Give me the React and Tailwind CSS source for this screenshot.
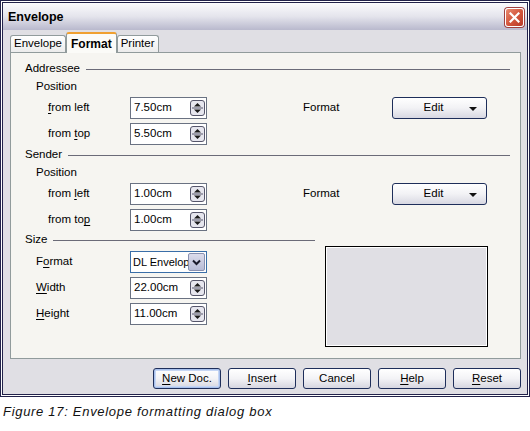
import React from "react";

const FONT = { fontFamily: '"Liberation Sans", Arial, sans-serif' };

function Spin() {
  return (
    <svg width="15" height="16" viewBox="0 0 15 16" className="shrink-0">
      <rect x="0.5" y="0.5" width="14" height="15" rx="2.5" fill="#e6e6ee" stroke="#55556a" />
      <line x1="2" y1="8" x2="13" y2="8" stroke="#55556a" />
      <path d="M4 6.5 L7.5 3 L11 6.5Z" fill="#1a1a1a" />
      <path d="M4 9.5 L7.5 13 L11 9.5Z" fill="#1a1a1a" />
    </svg>
  );
}

function NumField({ value }) {
  return (
    <div className="w-[77px] h-[22px] bg-white border border-[#6a7282] flex items-center justify-between pl-[3px] pr-[1px]">
      <span className="text-[11.5px] text-black">{value}</span>
      <Spin />
    </div>
  );
}

function U({ children }) {
  return <span className="underline underline-offset-[2px]">{children}</span>;
}

function Heading({ children, lineClass = "flex-1" }) {
  return (
    <div className="h-4 flex items-center pl-[14px]">
      <span className="text-[11.5px] text-black">{children}</span>
      <div className={`ml-[6px] h-px bg-[#6b6b78] ${lineClass}`} />
    </div>
  );
}

function SubHeading({ children }) {
  return (
    <div className="h-4 flex items-center pl-[25px] mt-[2px]">
      <span className="text-[11.5px] text-black">{children}</span>
    </div>
  );
}

function EditButton() {
  return (
    <div className="w-[95px] h-[22px] rounded-[3px] border border-[#1e2e5a] bg-gradient-to-b from-white via-[#f2f2f5] to-[#d8d8e2] flex items-center relative">
      <span className="flex-1 text-center text-[11.5px] text-black pr-[12px]">Edit</span>
      <svg width="8" height="4" viewBox="0 0 8 4" className="absolute right-[9px] top-[9px]">
        <path d="M0 0 L8 0 L4 4Z" fill="#111" />
      </svg>
    </div>
  );
}

function Row({ label, value, right, mt = "mt-[2px]" }) {
  return (
    <div className={`h-[22px] flex items-center ${mt}`}>
      <span className="w-[119px] pl-[37px] text-[11.5px] text-black">{label}</span>
      <NumField value={value} />
      {right && (
        <>
          <span className="ml-[96px] w-[89px] text-[11.5px] text-black">Format</span>
          <EditButton />
        </>
      )}
    </div>
  );
}

function Btn({ children, primary }) {
  return (
    <div
      className={`w-[68px] h-[21px] rounded-[3px] border border-[#1e2e5a] bg-gradient-to-b from-white via-[#f3f3f6] to-[#d6d6e0] flex items-center justify-center text-[11.5px] text-black ${
        primary ? "shadow-[inset_0_0_0_1px_#a8c0ec,inset_0_0_0_2px_#c6d6f4]" : ""
      }`}
    >
      {children}
    </div>
  );
}

export default function App() {
  return (
    <div className="w-[530px] h-[431px] bg-white relative overflow-hidden" style={FONT}>
      <div className="w-[530px] h-[397px] border-[3px] border-double border-[#22224a] bg-white flex flex-col">
        {/* title bar */}
        <div className="h-[27px] bg-gradient-to-b from-[#fbfbfd] via-[#e4e4ec] to-[#b9b9cd] flex items-center justify-between pl-[5px] pr-[3px] pt-[2px]">
          <span className="text-[12.5px] font-bold text-black">Envelope</span>
          <div className="w-[19px] h-[19px] rounded-[3px] border border-white bg-gradient-to-br from-[#e88a70] via-[#d4573d] to-[#b83a28] flex items-center justify-center shadow-[0_0_0_1px_#a04040]">
            <svg width="11" height="11" viewBox="0 0 11 11">
              <path d="M1.5 1.5 L9.5 9.5 M9.5 1.5 L1.5 9.5" stroke="white" strokeWidth="2.2" strokeLinecap="square" />
            </svg>
          </div>
        </div>
        {/* body */}
        <div className="flex-1 bg-[#e0dfe4] flex flex-col pl-[7px] pr-[6px]">
          {/* tabs */}
          <div className="h-[22px] flex items-end">
            <div className="h-[17px] px-[3px] flex items-center border border-b-0 border-[#919b9c] rounded-t-[3px] bg-gradient-to-b from-white to-[#ececec] text-[11.5px] text-black">
              Envelope
            </div>
            <div className="h-[21px] px-[4px] flex items-center border-x border-[#919b9c] border-t-[2px] border-t-[#f0a030] rounded-t-[3px] bg-[#fbfbf8] text-[12px] font-bold text-black -mb-px relative z-10">
              Format
            </div>
            <div className="h-[17px] px-[3px] flex items-center border border-b-0 border-[#919b9c] rounded-t-[3px] bg-gradient-to-b from-white to-[#ececec] text-[11.5px] text-black">
              Printer
            </div>
          </div>
          {/* panel */}
          <div className="w-[511px] h-[307px] border border-[#919b9c] bg-[#f6f5f1] pt-[8px] flex flex-col">
            <div className="pr-[10px]">
              <Heading>Addressee</Heading>
            </div>
            <SubHeading>Position</SubHeading>
            <Row label={<><U>f</U>rom left</>} value="7.50cm" right />
            <Row label={<>from <U>t</U>op</>} value="5.50cm" mt="mt-[4px]" />
            <div className="pr-[10px] mt-[2px]">
              <Heading>Sender</Heading>
            </div>
            <SubHeading>Position</SubHeading>
            <Row label={<>from <U>l</U>eft</>} value="1.00cm" right />
            <Row label={<>from to<U>p</U></>} value="1.00cm" mt="mt-[4px]" />
            <div className="flex mt-[1px]">
              <div className="w-[304px] flex flex-col">
                <Heading>Size</Heading>
                <div className="h-[22px] flex items-center mt-[3px]">
                  <span className="w-[119px] pl-[25px] text-[11.5px] text-black">F<U>o</U>rmat</span>
                  <div className="w-[77px] h-[22px] bg-white border border-[#3a6ea8] relative flex items-center pl-[2px] overflow-hidden">
                    <span className="text-[11px] text-black whitespace-nowrap">DL Envelope</span>
                    <div className="absolute right-[1px] top-[1px] w-[17px] h-[18px] rounded-[2px] border border-[#8890b0] bg-gradient-to-b from-[#dcdcec] to-[#b8bcd6] flex items-center justify-center">
                      <svg width="9" height="7" viewBox="0 0 9 7">
                        <path d="M1 1.5 L4.5 5 L8 1.5" stroke="#1a1a2a" strokeWidth="2" fill="none" />
                      </svg>
                    </div>
                  </div>
                </div>
                <div className="h-[22px] flex items-center mt-[4px]">
                  <span className="w-[119px] pl-[25px] text-[11.5px] text-black"><U>W</U>idth</span>
                  <NumField value="22.00cm" />
                </div>
                <div className="h-[22px] flex items-center mt-[4px]">
                  <span className="w-[119px] pl-[25px] text-[11.5px] text-black"><U>H</U>eight</span>
                  <NumField value="11.00cm" />
                </div>
              </div>
              <div className="ml-[10px] mt-[14px] w-[163px] h-[101px] border border-black bg-[#e0dfe4] shadow-[inset_0_0_0_1px_white]" />
            </div>
          </div>
          {/* buttons */}
          <div className="flex justify-end gap-[7px] mt-[9px]">
            <Btn primary><U>N</U>ew Doc.</Btn>
            <Btn><U>I</U>nsert</Btn>
            <Btn>Cancel</Btn>
            <Btn><U>H</U>elp</Btn>
            <Btn><U>R</U>eset</Btn>
          </div>
        </div>
      </div>
      <div className="pl-[3px] mt-[5px] text-[13px] italic tracking-[0.7px] text-[#111]">
        Figure 17: Envelope formatting dialog box
      </div>
    </div>
  );
}
